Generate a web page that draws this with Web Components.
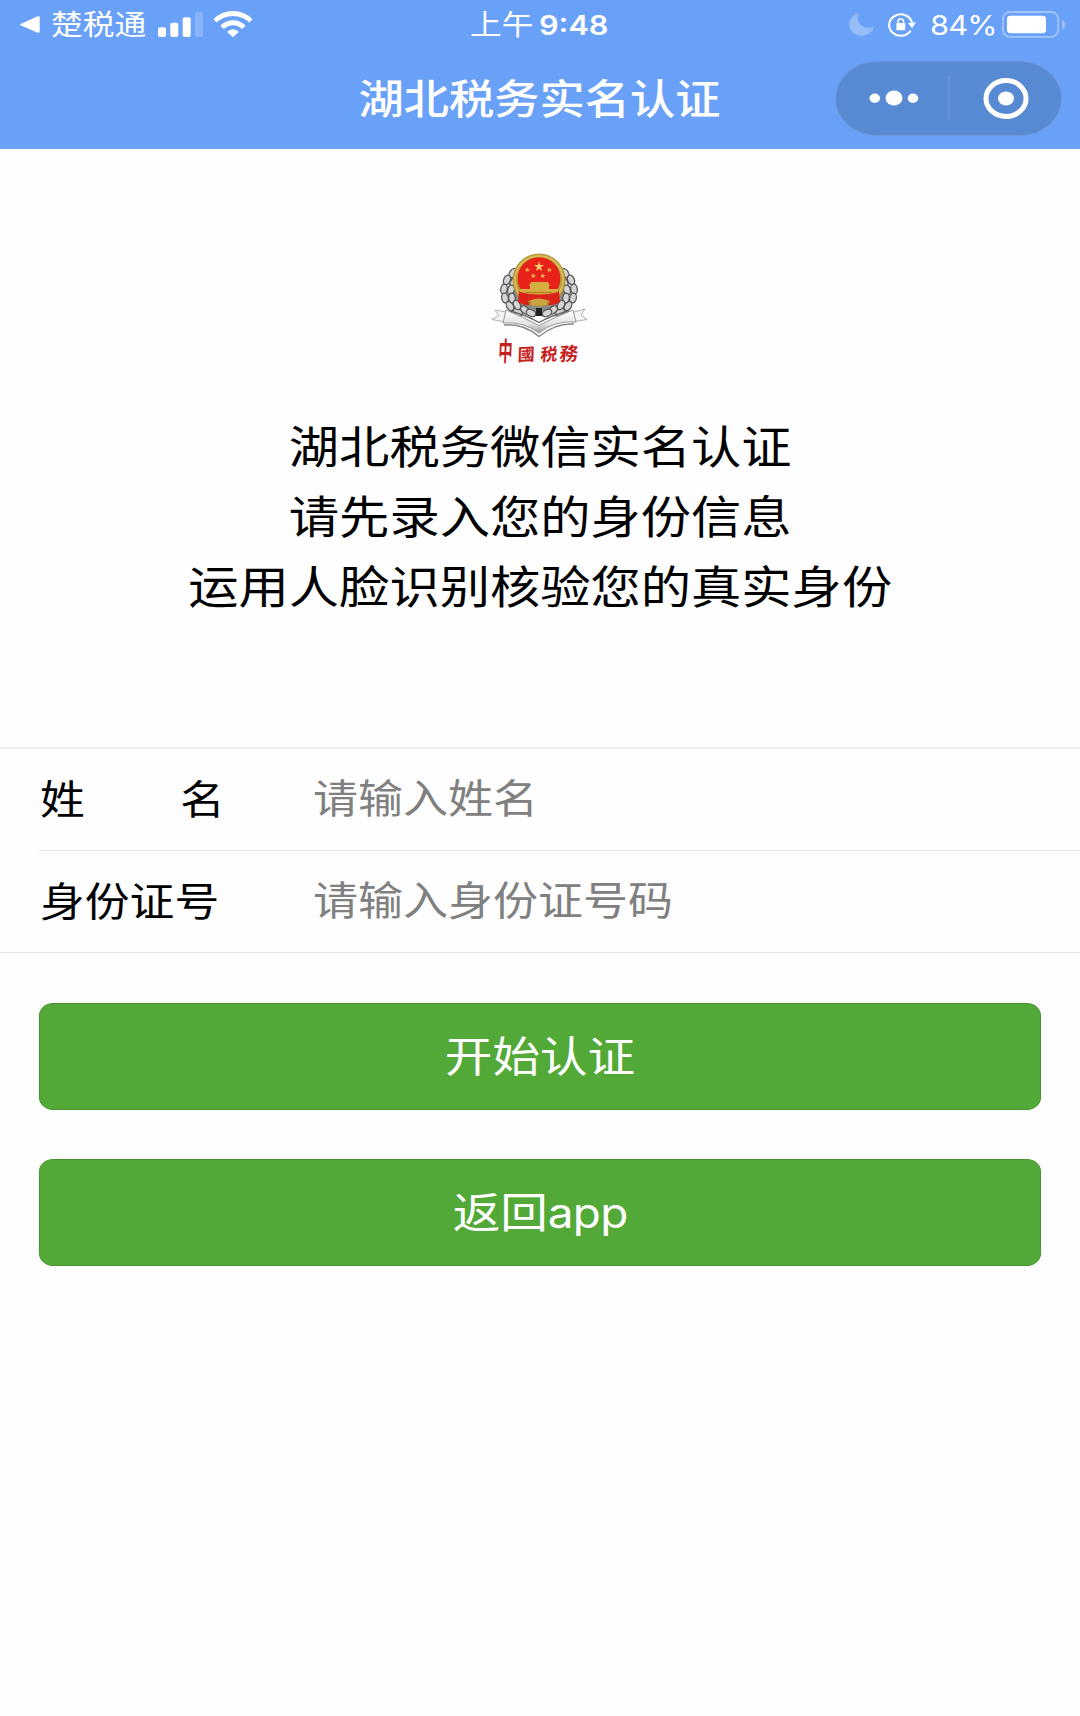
<!DOCTYPE html>
<html lang="zh-CN">
<head>
<meta charset="utf-8">
<title>湖北税务实名认证</title>
<style>
   body {
      margin: 0;
      background: #fefefe;
      color: #000;
      font-family: Inter, "Noto Sans CJK SC", sans-serif;
   }
</style>
</head>
<body>
<auth-page></auth-page>

<script>
/* Text drawn a little wider than it is tall */
class WideText extends HTMLElement {
   constructor() {
      super();
      this.attachShadow({mode: 'open'}).innerHTML = `
            <style>
                :host {
                    display: block;
                    white-space: nowrap;
                    transform: scaleX(var(--stretch, 1.12));
                    transform-origin: var(--origin, left) center;
                }
            </style>
            <slot></slot>
        `;
   }
}

class BackIcon extends HTMLElement {
   constructor() {
      super();
      this.attachShadow({mode: 'open'}).innerHTML = `
            <style>:host, svg { display: block; flex-shrink: 0; }</style>
            <svg width="20" height="18" viewBox="0 0 20 18">
                <path fill="currentColor" d="M.6 8.1 17.6.3Q19.7-.3 19.7 1.6V15.4Q19.7 17.3 17.6 16.7L.6 9.3Q-.4 8.7.6 8.1z"/>
            </svg>
        `;
   }
}

class SignalIcon extends HTMLElement {
   constructor() {
      super();
      this.attachShadow({mode: 'open'}).innerHTML = `
            <style>:host, svg { display: block; flex-shrink: 0; }</style>
            <svg width="45" height="25" viewBox="0 0 45 25" fill="currentColor">
                <rect x="0" y="15.2" width="8" height="9.8" rx="2"/>
                <rect x="12.3" y="10.7" width="8" height="14.3" rx="2"/>
                <rect x="24.7" y="5.2" width="8" height="19.8" rx="2"/>
                <rect x="37" y="0" width="8" height="25" rx="2" opacity=".2"/>
            </svg>
        `;
   }
}

class WifiIcon extends HTMLElement {
   constructor() {
      super();
      this.attachShadow({mode: 'open'}).innerHTML = `
            <style>:host, svg { display: block; flex-shrink: 0; }</style>
            <svg width="40" height="26" viewBox="0 0 40 26" fill="currentColor">
                <path d="M.5 8.2Q8.5 0 20 0T39.5 8.2L36.3 11.6Q29.5 5 20 5T3.7 11.6z"/>
                <path d="M7.3 14.7Q12.6 9.2 20 9.2T32.7 14.7L29.1 18.1Q25.2 14.2 20 14.2T10.9 18.1z"/>
                <path d="M14.2 21Q16.5 18.2 20 18.2T25.8 21L20.8 25.6Q20 26.2 19.2 25.6z"/>
            </svg>
        `;
   }
}

class MoonIcon extends HTMLElement {
   constructor() {
      super();
      this.attachShadow({mode: 'open'}).innerHTML = `
            <style>:host, svg { display: block; flex-shrink: 0; }</style>
            <svg width="25" height="23" viewBox="0 0 25 23">
                <path fill="currentColor" opacity=".3" d="M9 .3Q9.6.1 9.2 1C7.2 8.8 12.5 17 23.9 14.6Q24.9 14.4 24.6 15.2C22.5 20 17.5 22.7 12.2 22.7 5.4 22.7 0 17.8 0 11.6 0 6.6 3.8 1.9 9 .3z"/>
            </svg>
        `;
   }
}

class RotationLockIcon extends HTMLElement {
   constructor() {
      super();
      this.attachShadow({mode: 'open'}).innerHTML = `
            <style>:host, svg { display: block; flex-shrink: 0; }</style>
            <svg width="28" height="24" viewBox="0 0 28 24" fill="none" stroke="currentColor">
                <path stroke-width="2" d="M24 9.5A11.6 10.7 0 1 0 22.7 17.6"/>
                <path stroke="none" fill="currentColor" d="M20 10 28 9.3 24 15.2z"/>
                <rect stroke="none" fill="currentColor" x="8.4" y="10" width="8.8" height="7.2" rx="1"/>
                <path stroke-width="1.4" d="M10 10.4V8.5Q10 6 12.8 6T15.6 8.5V10.4"/>
            </svg>
        `;
   }
}

class BatteryIcon extends HTMLElement {
   constructor() {
      super();
      this.attachShadow({mode: 'open'}).innerHTML = `
            <style>:host, svg { display: block; flex-shrink: 0; }</style>
            <svg width="64" height="27" viewBox="0 0 64 27">
                <rect x="1" y="1" width="55.2" height="24.8" rx="7" fill="none" stroke="currentColor" stroke-width="1.8" opacity=".38"/>
                <path d="M60 9Q63.2 10.2 63.2 13.5T60 18.2z" fill="currentColor" opacity=".38"/>
                <rect x="5" y="4.8" width="39" height="17.4" rx="3.4" fill="currentColor"/>
            </svg>
        `;
   }
}

class StatusBar extends HTMLElement {
   constructor() {
      super();
      this.attachShadow({mode: 'open'}).innerHTML = `
            <style>
                :host {
                    display: grid;
                    grid-template-columns: 1fr auto 1fr;
                    align-items: center;
                    height: 47px;
                    padding: 0 14px 0 20px;
                    box-sizing: border-box;
                    font-size: 28.3px;
                    line-height: 46px;
                }
                .left, .right { display: flex; align-items: center; }
                .right { justify-content: flex-end; }
                .left back-icon { margin: 2px 11px 0 0; }
                .app { width: 107px; padding-top: 2px; }
                wifi-icon { margin-left: 10px; }
                .time { display: flex; width: 146px; padding-top: 2px; }
                .clock { font-weight: 600; font-size: 27.4px; margin-left: 12px; }
                .percent { width: 72px; padding-top: 2px; font-size: 27.5px; letter-spacing: -.8px; margin-left: 14px; }
                rotation-lock-icon { margin: 2px 0 0 14px; }
            </style>
            <div class="left">
                <back-icon></back-icon>
                <wide-text class="app">楚税通</wide-text>
                <signal-icon></signal-icon>
                <wifi-icon></wifi-icon>
            </div>
            <div class="time">
                <wide-text>上午</wide-text>
                <wide-text class="clock">9:48</wide-text>
            </div>
            <div class="right">
                <moon-icon></moon-icon>
                <rotation-lock-icon></rotation-lock-icon>
                <wide-text class="percent">84%</wide-text>
                <battery-icon></battery-icon>
            </div>
        `;
   }
}

class MenuCapsule extends HTMLElement {
   constructor() {
      super();
      this.attachShadow({mode: 'open'}).innerHTML = `
            <style>
                :host {
                    display: grid;
                    grid-template-columns: 1fr 2px 1fr;
                    align-items: center;
                    justify-items: center;
                    width: 227px;
                    height: 75px;
                    box-sizing: border-box;
                    border: 1px solid #6c97da;
                    border-radius: 42px / 37.5px;
                    background: #588ad3;
                }
                i { width: 2px; height: 44px; background: #6994d8; }
                svg { display: block; }
                .dots { margin-left: 5px; }
                .target { margin-left: 2px; }
            </style>
            <svg class="dots" width="50" height="16" viewBox="0 0 50 16" fill="currentColor">
                <ellipse cx="5.8" cy="8.3" rx="5.3" ry="4.7"/>
                <ellipse cx="25" cy="8" rx="8.5" ry="7.6"/>
                <ellipse cx="44" cy="8.3" rx="5.3" ry="4.7"/>
            </svg>
            <i></i>
            <svg class="target" width="46" height="41" viewBox="0 0 46 41">
                <ellipse cx="23" cy="20.5" rx="20" ry="18" fill="none" stroke="currentColor" stroke-width="5"/>
                <ellipse cx="23" cy="20.5" rx="8" ry="7.1" fill="currentColor"/>
            </svg>
        `;
   }
}

class NavBar extends HTMLElement {
   constructor() {
      super();
      this.attachShadow({mode: 'open'}).innerHTML = `
            <style>
                :host {
                    display: grid;
                    grid-template-columns: 1fr auto 1fr;
                    align-items: center;
                    height: 102px;
                    padding: 0 18px;
                    box-sizing: border-box;
                }
                wide-text {
                    grid-column: 2;
                    --origin: center;
                    padding-top: 4px;
                    font-size: 40.4px;
                    font-weight: 500;
                    line-height: 60px;
                }
                menu-capsule { justify-self: end; }
            </style>
            <wide-text><slot></slot></wide-text>
            <menu-capsule></menu-capsule>
        `;
   }
}

/* Tax service emblem: national shield, grain wreath, open book and lettering */
class TaxEmblem extends HTMLElement {
   constructor() {
      super();
      const grains = [
         [33, 33, 35], [27, 40, 22], [24, 49, 8], [25, 58, -12], [30, 66, -30], [38, 72, -50],
         [34, 42, 35], [31, 50, 15], [32, 58, -8], [37, 65, -28], [45, 70, -50], [51, 73, -65]
      ].map(([x, y, r]) => `<ellipse cx="${x}" cy="${y}" rx="3.3" ry="5" transform="rotate(${r} ${x} ${y})"/>`).join('');
      this.attachShadow({mode: 'open'}).innerHTML = `
            <style>
                :host, svg { display: block; }
                text { font-family: "Noto Sans CJK TC", "Noto Sans CJK SC", sans-serif; font-weight: 700; }
            </style>
            <svg width="120" height="135" viewBox="0 0 120 135">
                <defs>
                    <linearGradient id="silver" x2="0" y2="1">
                        <stop offset="0" stop-color="#fff"/>
                        <stop offset=".6" stop-color="#e4e4e4"/>
                        <stop offset="1" stop-color="#999"/>
                    </linearGradient>
                    <g id="wreath" fill="#d4d4d4" stroke="#555" stroke-width="1.3">${grains}</g>
                </defs>
                <path d="M33 35Q24 50 33 64L50 76H68L85 64Q94 50 85 35z" fill="#8a8a8a"/>
                <use href="#wreath"/>
                <use href="#wreath" transform="matrix(-1 0 0 1 118 0)"/>
                <path d="M56 68H62V76H56z" fill="#222"/>
                <ellipse cx="59" cy="40" rx="26.5" ry="26.5" fill="#b89835"/>
                <ellipse cx="59" cy="40" rx="24" ry="24" fill="none" stroke="#d5bd5b" stroke-width="2"/>
                <ellipse cx="59" cy="38.5" rx="21.3" ry="21.3" fill="#e82218"/>
                <path d="M39 51H79L80 62Q72 66 69 65H49Q46 66 38 62z" fill="#db2319"/>
                <path d="M59 21.5 60.2 25.1H64L60.9 27.3 62.1 31 59 28.8 55.9 31 57.1 27.3 54 25.1H57.8z" fill="#f3cf75"/>
                <g fill="#efb85d">
                    <path id="star" d="M47.3 27.3 48 29.2H50L48.4 30.4 49 32.3 47.3 31.1 45.6 32.3 46.2 30.4 44.6 29.2H46.6z"/>
                    <use href="#star" x="22"/>
                    <use href="#star" x="6" y="5.8"/>
                    <use href="#star" x="15.5" y="5.8"/>
                </g>
                <path d="M51 42H68L70 46H49zM50 46H69V49H78V52Q59 57 40 52V49H50z" fill="#d5ae42"/>
                <path d="M46 52.5H72" stroke="#b77a26" stroke-width="1.2"/>
                <path d="M48 61Q59 56 70 61L68 65H50z" fill="#c9a640"/>
                <path d="M50 60.5V65M68 60.5V65" stroke="#a57924" stroke-width="1.5"/>
                <path d="M26 72 15 70 19 75.5 12 79.5 25 82M94 72 105 69 101 75 107 79.5 92 82" fill="#f4f4f4" stroke="#b0b0b0" stroke-width="1"/>
                <path d="M26 70Q43 77 59 85.5 75 77 93 70L96 82Q75 80 59 93 43 81 23 83z" fill="url(#silver)" stroke="#999" stroke-width="1"/>
                <path d="M30 71Q46 75 59 82.5 72 75 89 71" fill="none" stroke="#666" stroke-width="1.3"/>
                <path d="M24 85Q43 83 59 96.5 75 83 94 84" fill="none" stroke="#888" stroke-width="1.6"/>
                <g fill="#c5201d">
                    <text font-size="19" transform="translate(18 121) scale(.75 1.4) skewX(-4)">中</text>
                    <text font-size="17" transform="translate(37.5 121) rotate(-3) skewX(-5)">國</text>
                    <text font-size="17" transform="translate(60 121) rotate(-3) skewX(-8)">税</text>
                    <text font-size="18.5" transform="translate(79 121) rotate(-3) skewX(-8)">務</text>
                </g>
            </svg>
        `;
   }
}

class AuthIntro extends HTMLElement {
   constructor() {
      super();
      this.attachShadow({mode: 'open'}).innerHTML = `
            <style>
                :host {
                    display: flex;
                    flex-direction: column;
                    align-items: center;
                    height: 598px;
                    padding-top: 91px;
                    box-sizing: border-box;
                    font-size: 44.9px;
                    line-height: 70px;
                    text-align: center;
                    --origin: center;
                }
                wide-text { margin-top: 38px; }
            </style>
            <tax-emblem></tax-emblem>
            <wide-text><slot></slot></wide-text>
        `;
   }
}

class FormField extends HTMLElement {
   constructor() {
      super();
      this.attachShadow({mode: 'open'}).innerHTML = `
            <style>
                :host {
                    display: flex;
                    align-items: center;
                    height: 102px;
                    box-sizing: border-box;
                    margin-left: var(--inset, 0);
                    padding-left: calc(40px - var(--inset, 0px));
                    border-bottom: 1px solid #e6e6e6;
                    font-size: 40.2px;
                    line-height: 60px;
                }
                .label { width: 273px; }
                .label wide-text { width: 166px; padding-top: 1px; font-size: 40px; }
                .stretch { width: 600px; transform: scaleX(1.12); transform-origin: left center; }
                input {
                    display: block;
                    width: 100%;
                    height: 60px;
                    margin: -2px 0 0;
                    padding: 0;
                    border: 0;
                    outline: none;
                    background: none;
                    font: inherit;
                }
                input::placeholder { color: #808080; opacity: 1; }
            </style>
            <div class="label"><wide-text><slot></slot></wide-text></div>
            <div class="stretch"><input></div>
        `;
      this.shadowRoot.querySelector('input').placeholder = this.getAttribute('placeholder');
   }
}

class ActionButton extends HTMLElement {
   constructor() {
      super();
      this.attachShadow({mode: 'open'}).innerHTML = `
            <style>
                :host { display: block; }
                button {
                    display: flex;
                    align-items: center;
                    justify-content: center;
                    width: 100%;
                    height: 107px;
                    padding: 0;
                    border: 1px solid #46952f;
                    border-radius: 14px / 12.5px;
                    background: #52a938;
                    color: #fff;
                    font: inherit;
                    font-size: 42.5px;
                    line-height: 60px;
                    --origin: center;
                }
            </style>
            <button><wide-text><slot></slot></wide-text></button>
        `;
   }
}

class AuthPage extends HTMLElement {
   constructor() {
      super();
      this.attachShadow({mode: 'open'}).innerHTML = `
            <style>
                :host { display: block; height: 1716px; overflow: hidden; }
                header { background: #69a0f8; color: #fff; }
                .form { display: block; border-top: 2px solid #ededed; }
                .name { --inset: 39px; }
                .name .gap { display: inline-block; width: 85px; }
                .actions {
                    display: flex;
                    flex-direction: column;
                    gap: 49px;
                    padding: 50px 39px 0;
                }
                .latin { font-size: 41px; letter-spacing: -.7px; }
            </style>
            <header>
                <status-bar></status-bar>
                <nav-bar>湖北税务实名认证</nav-bar>
            </header>
            <auth-intro>湖北税务微信实名认证<br>请先录入您的身份信息<br>运用人脸识别核验您的真实身份</auth-intro>
            <section class="form">
                <form-field class="name" placeholder="请输入姓名">姓<span class="gap"></span>名</form-field>
                <form-field placeholder="请输入身份证号码">身份证号</form-field>
            </section>
            <div class="actions">
                <action-button>开始认证</action-button>
                <action-button>返回<span class="latin">app</span></action-button>
            </div>
        `;
   }
}

customElements.define('wide-text', WideText);
customElements.define('back-icon', BackIcon);
customElements.define('signal-icon', SignalIcon);
customElements.define('wifi-icon', WifiIcon);
customElements.define('moon-icon', MoonIcon);
customElements.define('rotation-lock-icon', RotationLockIcon);
customElements.define('battery-icon', BatteryIcon);
customElements.define('status-bar', StatusBar);
customElements.define('menu-capsule', MenuCapsule);
customElements.define('nav-bar', NavBar);
customElements.define('tax-emblem', TaxEmblem);
customElements.define('auth-intro', AuthIntro);
customElements.define('form-field', FormField);
customElements.define('action-button', ActionButton);
customElements.define('auth-page', AuthPage);
</script>
</body>
</html>
